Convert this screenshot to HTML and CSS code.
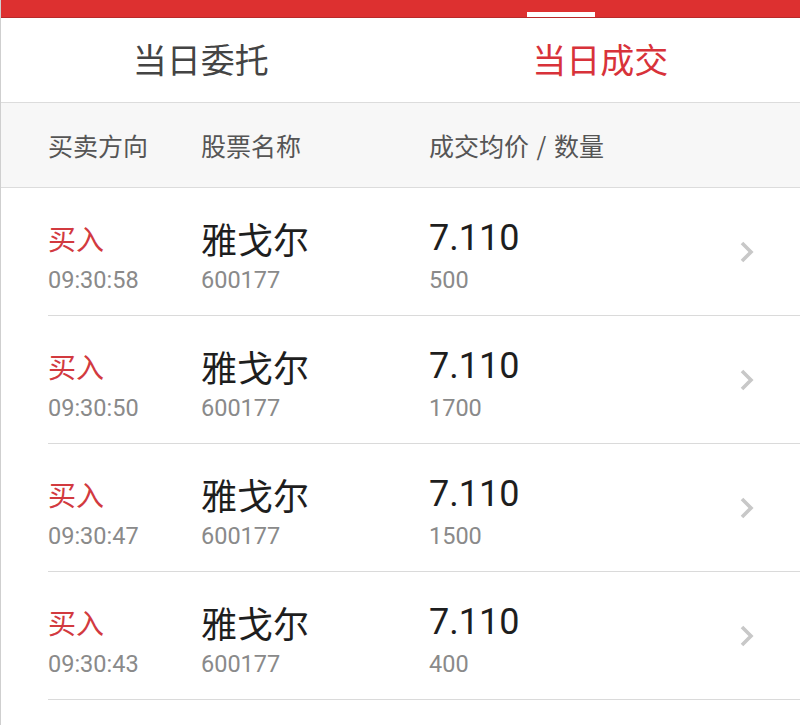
FILE: index.html
```html
<!DOCTYPE html>
<html lang="zh">
<head>
<meta charset="utf-8">
<title>当日成交</title>
<link rel="stylesheet" href="styles.css">
</head>
<body>
<div class="app">
  <div class="topbar"><span class="indicator"></span></div>
  <div class="tabs">
    <div class="tab">当日委托</div>
    <div class="tab active">当日成交</div>
  </div>
  <div class="thead">
    <div class="c1">买卖方向</div>
    <div class="c2">股票名称</div>
    <div class="c3">成交均价 / 数量</div>
  </div>
  <div class="list">
    <div class="row">
      <div class="c1"><div class="dir">买入</div><div class="sub">09:30:58</div></div>
      <div class="c2"><div class="name">雅戈尔</div><div class="sub">600177</div></div>
      <div class="c3"><div class="price">7.110</div><div class="sub">500</div></div>
      <svg class="chev" viewBox="0 0 16 24"><path d="M3 3 L12 12 L3 21" fill="none" stroke="#c8c8c8" stroke-width="3.6"/></svg>
    </div>
    <div class="row">
      <div class="c1"><div class="dir">买入</div><div class="sub">09:30:50</div></div>
      <div class="c2"><div class="name">雅戈尔</div><div class="sub">600177</div></div>
      <div class="c3"><div class="price">7.110</div><div class="sub">1700</div></div>
      <svg class="chev" viewBox="0 0 16 24"><path d="M3 3 L12 12 L3 21" fill="none" stroke="#c8c8c8" stroke-width="3.6"/></svg>
    </div>
    <div class="row">
      <div class="c1"><div class="dir">买入</div><div class="sub">09:30:47</div></div>
      <div class="c2"><div class="name">雅戈尔</div><div class="sub">600177</div></div>
      <div class="c3"><div class="price">7.110</div><div class="sub">1500</div></div>
      <svg class="chev" viewBox="0 0 16 24"><path d="M3 3 L12 12 L3 21" fill="none" stroke="#c8c8c8" stroke-width="3.6"/></svg>
    </div>
    <div class="row">
      <div class="c1"><div class="dir">买入</div><div class="sub">09:30:43</div></div>
      <div class="c2"><div class="name">雅戈尔</div><div class="sub">600177</div></div>
      <div class="c3"><div class="price">7.110</div><div class="sub">400</div></div>
      <svg class="chev" viewBox="0 0 16 24"><path d="M3 3 L12 12 L3 21" fill="none" stroke="#c8c8c8" stroke-width="3.6"/></svg>
    </div>
  </div>
</div>
</body>
</html>
```
FILE: styles.css
```css
* { box-sizing: border-box; }
html, body { margin: 0; padding: 0; background: #fff; }
body {
  font-family: Roboto, "Noto Sans CJK SC", sans-serif;
  width: 800px;
  height: 725px;
  overflow: hidden;
}
.app {
  height: 725px;
  border-left: 1px solid #cfcfcf;
}
.topbar {
  height: 18px;
  background: #dd3030;
  border-bottom: 1px solid #b92a2a;
  position: relative;
}
.indicator {
  position: absolute;
  left: 526px;
  top: 12px;
  width: 68px;
  height: 5px;
  background: #fff;
}
.tabs {
  display: flex;
  height: 85px;
  border-bottom: 1px solid #dcdcdc;
}
.tab {
  flex: 1;
  display: flex;
  align-items: center;
  justify-content: center;
  font-family: "Noto Sans CJK SC", sans-serif;
  font-size: 34px;
  color: #444;
  padding-bottom: 4px;
}
.tab.active { color: #d8323a; }
.thead {
  display: flex;
  align-items: center;
  height: 85px;
  background: #f7f7f7;
  border-bottom: 1px solid #dcdcdc;
  padding-left: 47px;
  font-family: "Noto Sans CJK SC", sans-serif;
  font-size: 25px;
  color: #555;
}
.c1 { width: 153px; }
.c2 { width: 228px; }
.c3 { flex: 1; }
.thead .c3 { word-spacing: 2px; }
.list { padding-left: 47px; }
.row {
  display: flex;
  align-items: center;
  height: 128px;
  border-bottom: 1px solid #dadada;
  padding-top: 8px;
}
.dir {
  font-family: "Noto Sans CJK SC", sans-serif;
  font-size: 28px;
  color: #d23a3f;
  line-height: 38px;
}
.name {
  font-family: "Noto Sans CJK SC", sans-serif;
  font-size: 36px;
  color: #1e1e1e;
  line-height: 38px;
}
.price {
  font-family: Roboto, sans-serif;
  font-size: 36px;
  color: #1e1e1e;
  line-height: 38px;
}
.sub {
  font-family: Roboto, sans-serif;
  font-size: 23.5px;
  color: #8a8a8a;
  line-height: 26px;
  margin-top: 10px;
}
.chev {
  width: 16px;
  height: 24px;
  margin-right: 45px;
  margin-top: -7px;
}
```
